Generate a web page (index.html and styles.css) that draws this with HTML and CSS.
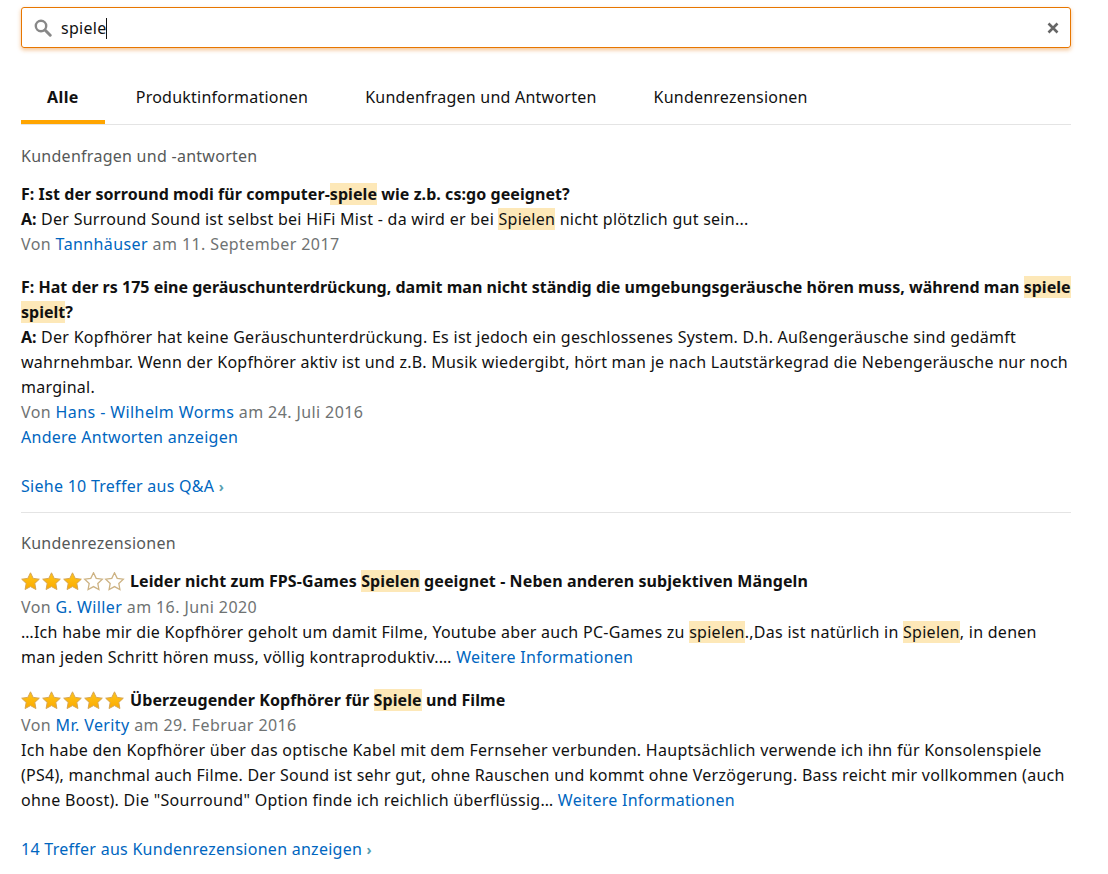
FILE: index.html
```html
<!DOCTYPE html>
<html lang="de">
<head>
    <meta charset="UTF-8">
    <title>Kundenrezensionen</title>
    <link rel="stylesheet" href="styles.css">
</head>
<body>

    <div class="search">
        <svg class="search-icon" width="18" height="18" viewBox="0 0 18 18">
            <circle cx="7" cy="7" r="5.2" fill="none" stroke="#888" stroke-width="2.4"/>
            <path d="M11 11l5.2 5.2" stroke="#888" stroke-width="3" stroke-linecap="round"/>
        </svg>
        <span class="query">spiele</span>
        <svg class="clear-icon" width="12" height="12" viewBox="0 0 12 12">
            <path d="M1.500 1.500l9 9M10.500 1.500l-9 9" stroke="#666" stroke-width="2.600"/>
        </svg>
    </div>

    <div class="tabs">
        <a class="tab active">Alle</a>
        <a class="tab">Produktinformationen</a>
        <a class="tab">Kundenfragen und Antworten</a>
        <a class="tab">Kundenrezensionen</a>
    </div>

    <svg width="0" height="0" class="defs">
        <defs>
            <linearGradient id="gold" x1="0" y1="0" x2="0" y2="1">
                <stop offset="0" stop-color="#ffc61a"/>
                <stop offset="1" stop-color="#fbaa00"/>
            </linearGradient>
            <path id="star" d="M9.500 .8l2.700 5.600 6.100.8-4.500 4.200 1.100 6.100-5.400-2.900-5.400 2.900 1.100-6.100L.7 7.200l6.100-.8z"/>
        </defs>
    </svg>

    <section class="group qa">
        <h2>Kundenfragen und -antworten</h2>

        <div class="item">
            <p class="question first-question">F: Ist der sorround modi für computer-<mark>spiele</mark> wie z.b. cs:go geeignet?</p>
            <p><b>A:</b> Der Surround Sound ist selbst bei HiFi Mist - da wird er bei <mark>Spielen</mark> nicht plötzlich gut sein...</p>
            <p class="by">Von <a>Tannhäuser</a> am 11. September 2017</p>
        </div>

        <div class="item">
            <p class="question">F: Hat der rs 175 eine geräuschunterdrückung, damit man nicht ständig die umgebungsgeräusche hören muss, während man <mark>spiele</mark> <mark>spielt</mark>?</p>
            <p><b>A:</b> Der Kopfhörer hat keine Geräuschunterdrückung. Es ist jedoch ein geschlossenes System. D.h. Außengeräusche sind gedämft wahrnehmbar. Wenn der Kopfhörer aktiv ist und z.B. Musik wiedergibt, hört man je nach Lautstärkegrad die Nebengeräusche nur noch marginal.</p>
            <p class="by">Von <a>Hans - Wilhelm Worms</a> am 24. Juli 2016</p>
            <p><a>Andere Antworten anzeigen</a></p>
        </div>

        <p class="more"><a>Siehe 10 Treffer aus Q&amp;A</a> <span class="chevron">›</span></p>
    </section>

    <section class="group reviews">
        <h2>Kundenrezensionen</h2>

        <div class="review first">
            <p class="title">
                <svg class="stars" width="104" height="20" viewBox="0 0 104 20">
                    <use href="#star" x="0" class="full"/>
                    <use href="#star" x="21" class="full"/>
                    <use href="#star" x="42" class="full"/>
                    <use href="#star" x="63" class="empty"/>
                    <use href="#star" x="84" class="empty"/>
                </svg>
                <span>Leider nicht zum FPS-Games <mark>Spielen</mark> geeignet - Neben anderen subjektiven Mängeln</span>
            </p>
            <p class="by">Von <a>G. Willer</a> am 16. Juni 2020</p>
            <p>…Ich habe mir die Kopfhörer geholt um damit Filme, Youtube aber auch PC-Games zu <mark>spielen</mark>.,Das ist natürlich in <mark>Spielen</mark>, in denen man jeden Schritt hören muss, völlig kontraproduktiv.… <a>Weitere Informationen</a></p>
        </div>

        <div class="review">
            <p class="title">
                <svg class="stars" width="104" height="20" viewBox="0 0 104 20">
                    <use href="#star" x="0" class="full"/>
                    <use href="#star" x="21" class="full"/>
                    <use href="#star" x="42" class="full"/>
                    <use href="#star" x="63" class="full"/>
                    <use href="#star" x="84" class="full"/>
                </svg>
                <span>Überzeugender Kopfhörer für <mark>Spiele</mark> und Filme</span>
            </p>
            <p class="by">Von <a>Mr. Verity</a> am 29. Februar 2016</p>
            <p>Ich habe den Kopfhörer über das optische Kabel mit dem Fernseher verbunden. Hauptsächlich verwende ich ihn für Konsolenspiele (PS4), manchmal auch Filme. Der Sound ist sehr gut, ohne Rauschen und kommt ohne Verzögerung. Bass reicht mir vollkommen (auch ohne Boost). Die "Sourround" Option finde ich reichlich überflüssig… <a>Weitere Informationen</a></p>
        </div>

        <p class="more"><a>14 Treffer aus Kundenrezensionen anzeigen</a> <span class="chevron">›</span></p>
    </section>

</body>
</html>
```
FILE: styles.css
```css
*{
    box-sizing: border-box;
}
html, body{
    margin: 0;
    padding: 0;
    height: 100%;
    overflow: hidden;
}
body{
    padding: 7px 37px 0 21px;
    font-family: 'Noto Sans', sans-serif;
    font-size: 16px;
    line-height: 25px;
    letter-spacing: .27px;
    color: #111;
    background: #fff;
}
p, h2{
    margin: 0;
}
a{
    color: #0066c0;
}
b{
    font-weight: 700;
    letter-spacing: .05px;
}
mark{
    color: inherit;
    background: #fde8b8;
}
.defs{
    position: absolute;
}

.search{
    display: flex;
    align-items: center;
    height: 41px;
    padding: 0 11px 0 12px;
    border: 1px solid #e77600;
    border-radius: 3px;
    box-shadow: 0 2px 4px rgba(228, 121, 17, .45);
}
.search-icon{
    flex: none;
}
.query{
    flex: 1;
    margin-left: 9px;
    padding-top: 1px;
}
.query::after{
    content: '';
    display: inline-block;
    width: 1px;
    height: 21px;
    background: #111;
    vertical-align: -5px;
}

.tabs{
    display: flex;
    margin-top: 26px;
    border-bottom: 1px solid #e4e4e4;
    letter-spacing: .23px;
}
.tab{
    height: 50px;
    padding: 11px 26px 0;
    margin-right: 5px;
    color: #111;
}
.tab.active{
    padding: 11px 26px 0;
    font-weight: 700;
    letter-spacing: .4px;
    border-bottom: 4px solid #ffa500;
    margin-bottom: -1px;
}

.group h2{
    font-size: 16px;
    font-weight: 400;
    color: #565959;
}
.qa{
    padding: 19px 0 13px;
    border-bottom: 1px solid #e4e4e4;
}
.qa .item{
    margin-top: 13px;
}
.qa .item + .item{
    margin-top: 18px;
}
.question{
    font-weight: 700;
    letter-spacing: .02px;
}
.first-question{
    letter-spacing: .06px;
}
.by{
    color: #6f7373;
    letter-spacing: .4px;
}
.more{
    margin-top: 24px;
}
.chevron{
    color: #5a9fb0;
    font-size: 14px;
    font-weight: 700;
}

.reviews{
    padding-top: 18px;
}
.review{
    margin-top: 13px;
}
.review + .review{
    margin-top: 18px;
}
.title{
    display: flex;
    align-items: center;
    font-weight: 700;
    letter-spacing: .1px;
}
.first .title{
    margin-bottom: 1px;
}
.stars{
    flex: none;
    margin-right: 5px;
}
.full{
    fill: url(#gold);
    stroke: #d6a552;
    stroke-width: 1;
}
.empty{
    fill: #fff;
    stroke: #cdb384;
    stroke-width: 1.3;
}
```
